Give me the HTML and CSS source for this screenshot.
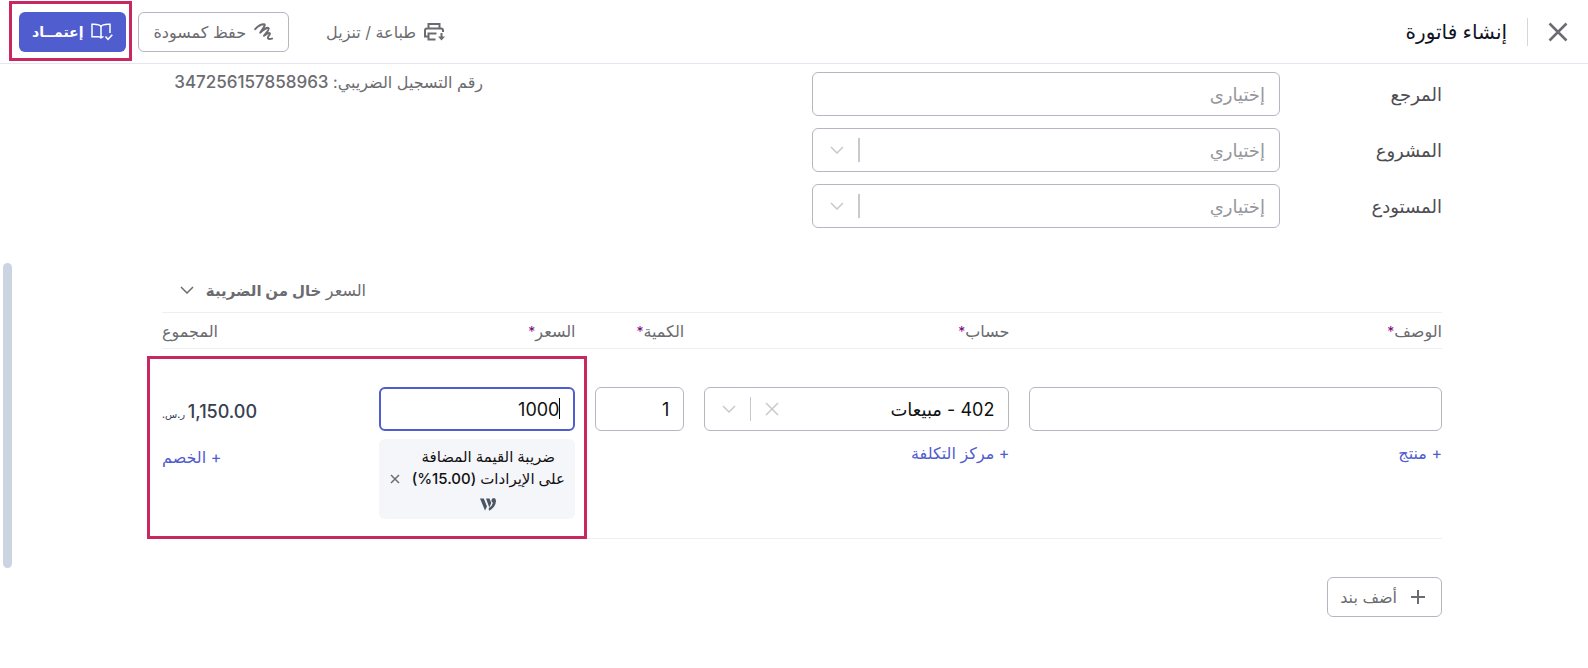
FILE: index.html
```html
<!DOCTYPE html>
<html lang="ar" dir="rtl">
<head>
  <meta charset="UTF-8">
  <meta name="viewport" content="width=device-width, initial-scale=1">
  <title>إنشاء فاتورة</title>
  <link rel="stylesheet" href="styles.css">
</head>
<body>
  <!-- Top bar -->
  <header class="topbar">
    <button type="button" class="icon-btn close-page" aria-label="إغلاق">
      <svg width="20" height="20" viewBox="0 0 20 20"><path d="M1.5 1.5l17 17M18.5 1.5l-17 17"/></svg>
    </button>
    <h1 class="page-title">إنشاء فاتورة</h1>
    <div class="actions">
      <button type="button" class="btn btn-plain">
        <svg class="icon" width="21" height="18" viewBox="0 0 21 18"><path d="M4.500 5.500V1h11v4.500M3.500 13.500H1V7.500q0-2 2-2h14q2 0 2 2V9M11.500 16.500h-7V10.500h8M17.500 10v6"/><path class="solid" d="M14 13.500h7L17.500 17.500z"/></svg>
        <span>طباعة / تنزيل</span>
      </button>
      <button type="button" class="btn btn-outline">
        <svg class="icon" width="20" height="18" viewBox="0 0 20 18"><path stroke-linecap="round" stroke-linejoin="round" d="M1.200 6.200C4 3 8 1.200 10.200 1.300 11.800 1.500 10 4 6.300 9.600 9.500 6.500 13.500 4.200 14.600 5.200c1.200 1-2 4-4.600 7.600 2.500-2 5-3.300 5.800-2.500.9 1-2.600 3.500-1.800 4.900.6 1 2.400.9 4 .4"/></svg>
        <span>حفظ كمسودة</span>
      </button>
      <div class="highlight">
        <button type="button" class="btn btn-primary">
          <svg class="icon" width="22" height="18" viewBox="0 0 22 18"><path d="M10 3.500C8.800 1.500 5.500 1 1 1.300v12.500h6.500q2 0 2.500 1.500V3.500C11.200 1.500 14.500 1 19 1.300V10M10 15.300q.3-1.500 2.500-1.500M14.500 13.500l2.500 2.800L21.300 11.800"/></svg>
          <span>إعتمــاد</span>
        </button>
      </div>
    </div>
  </header>

  <div class="scroll-thumb"></div>

  <main class="content">
    <section class="details">
      <div class="fields">
        <label for="reference">المرجع</label>
        <input type="text" id="reference" class="control" placeholder="إختيارى">

        <label for="project">المشروع</label>
        <div class="select-box">
          <select id="project" class="control empty"><option>إختياري</option></select>
          <span class="select-end">
            <span class="bar thick"></span>
            <svg class="chevron" width="14" height="8" viewBox="0 0 14 8"><path d="M1 1l6 6 6-6"/></svg>
          </span>
        </div>

        <label for="warehouse">المستودع</label>
        <div class="select-box">
          <select id="warehouse" class="control empty"><option>إختياري</option></select>
          <span class="select-end">
            <span class="bar thick"></span>
            <svg class="chevron" width="14" height="8" viewBox="0 0 14 8"><path d="M1 1l6 6 6-6"/></svg>
          </span>
        </div>
      </div>
      <p class="tax-number">رقم التسجيل الضريبي: <span class="digits">347256157858963</span></p>
    </section>

    <!-- Line items -->
    <section class="items">
      <button type="button" class="price-mode">
        <span>السعر <b>خال من الضريبة</b></span>
        <svg class="chevron" width="14" height="8" viewBox="0 0 14 8"><path d="M1 1l6 6 6-6"/></svg>
      </button>

      <table class="lines">
        <colgroup>
          <col class="col-desc">
          <col class="col-account">
          <col class="col-qty">
          <col class="col-price">
          <col class="col-total">
        </colgroup>
        <thead>
          <tr>
            <th scope="col">الوصف<span class="req">*</span></th>
            <th scope="col">حساب<span class="req">*</span></th>
            <th scope="col">الكمية<span class="req">*</span></th>
            <th scope="col">السعر<span class="req">*</span></th>
            <th scope="col" class="total">المجموع</th>
          </tr>
        </thead>
        <tbody>
          <tr>
            <td>
              <input type="text" class="control" aria-label="الوصف">
              <a href="#" class="add-link">+ منتج</a>
            </td>
            <td>
              <div class="select-box">
                <select class="control" aria-label="حساب"><option>402 - مبيعات</option></select>
                <span class="select-end">
                  <button type="button" class="icon-btn clear" aria-label="مسح">
                    <svg width="14" height="14" viewBox="0 0 14 14"><path d="M1 1l12 12M13 1L1 13"/></svg>
                  </button>
                  <span class="bar"></span>
                  <svg class="chevron" width="14" height="8" viewBox="0 0 14 8"><path d="M1 1l6 6 6-6"/></svg>
                </span>
              </div>
              <a href="#" class="add-link">+ مركز التكلفة</a>
            </td>
            <td>
              <input type="text" class="control" value="1" aria-label="الكمية">
            </td>
            <td>
              <div class="price-box">
                <input type="text" class="control active" value="1000" aria-label="السعر">
                <span class="caret"></span>
              </div>
              <div class="tax-chip">
                <div class="tax-name">
                  ضريبة القيمة المضافة<br>على الإيرادات (15.00%)
                  <svg class="logo" width="16" height="13" viewBox="0 0 16 13"><path d="M0 .5h3.800l3.200 8-2 4zM6 .5h3.500l1.800 4.500-2 4.500zM13.800 0q2.200.2 2.200 3Q15.500 9.500 9 12.800l-.3-2.600q3.600-2 4.300-5.400-1.600-.3-1.600-2.200Q11.500.2 13.800 0z"/></svg>
                </div>
                <button type="button" class="icon-btn remove-tax" aria-label="إزالة">
                  <svg width="10" height="10" viewBox="0 0 10 10"><path d="M1 1l8 8M9 1L1 9"/></svg>
                </button>
              </div>
            </td>
            <td class="total">
              <div class="amount">1,150.00<small> ر.س.</small></div>
              <a href="#" class="add-link">+ الخصم</a>
            </td>
          </tr>
        </tbody>
      </table>
      <div class="row-highlight"></div>
    </section>

    <button type="button" class="btn btn-outline add-line">
      <svg class="icon" width="14" height="14" viewBox="0 0 14 14"><path d="M7 0v14M0 7h14"/></svg>
      <span>أضف بند</span>
    </button>
  </main>
</body>
</html>
```
FILE: styles.css
```css
* {
  box-sizing: border-box;
}

body {
  margin: 0;
  background-color: #fff;
  color: #6b6c70;
  font-family: Inter, "DejaVu Sans", sans-serif;
  font-size: 16px;
}

button,
input,
select {
  font-family: inherit;
  font-size: 16px;
  color: inherit;
}

svg {
  display: block;
  flex: none;
  fill: none;
  stroke: currentColor;
  stroke-width: 2;
}

/* Top bar */
.topbar {
  display: flex;
  align-items: center;
  height: 64px;
  padding: 0 20px 0 19px;
  border-bottom: 1px solid #e5e6ef;
}

.icon-btn {
  padding: 0;
  border: none;
  background: none;
  cursor: pointer;
}

.page-title {
  margin: 0 20px 0 0;
  padding-right: 20px;
  border-right: 1px solid #d5d6da;
  color: #111322;
  font-size: 20px;
  font-weight: 500;
  line-height: 28px;
}

.actions {
  display: flex;
  gap: 12px;
  margin-right: auto;
}

.btn {
  display: flex;
  align-items: center;
  justify-content: center;
  gap: 8px;
  height: 40px;
  padding: 0 12px;
  border: 1px solid transparent;
  border-radius: 6px;
  background-color: transparent;
  white-space: nowrap;
  cursor: pointer;
}

.btn-plain {
  margin-left: 12px;
}

.btn-outline {
  padding: 0 14px;
  border-color: #b5b6c0;
}

.btn-primary {
  background-color: #505dcf;
  color: #fff;
  font-size: 14px;
  font-weight: 600;
}

.icon .solid {
  fill: currentColor;
  stroke: none;
}

.btn-primary .icon {
  stroke-width: 1.5px;
}

.highlight {
  position: relative;
}

.highlight::after {
  content: "";
  position: absolute;
  inset: -11px -6px -9px -10px;
  border: 3px solid #c8285f;
  pointer-events: none;
}

.scroll-thumb {
  position: fixed;
  top: 263px;
  left: 3px;
  width: 9px;
  height: 305px;
  border-radius: 5px;
  background-color: #cbd5e1;
}

/* Page content */
.content {
  max-width: 1280px;
  margin: 0 146px 0 162px;
  padding-top: 8px;
}

.details {
  display: flex;
  justify-content: space-between;
  align-items: flex-start;
}

.fields {
  display: grid;
  grid-template-columns: 162px 1fr;
  row-gap: 12px;
  align-items: center;
  width: 630px;
  color: #4c4d52;
  font-size: 18px;
}

.tax-number {
  width: 321px;
  margin: 0;
  line-height: 20px;
}

.digits {
  font-size: 17px;
  font-weight: 500;
}

.control {
  display: block;
  width: 100%;
  height: 44px;
  padding: 0 14px;
  border: 1px solid #b5b6c0;
  border-radius: 6px;
  background-color: #fff;
  color: #111;
  font-size: 18px;
  appearance: none;
  outline: none;
}

.control.empty,
.control::placeholder {
  color: #96979c;
  opacity: 1;
}

.control.active {
  border: 2px solid #505dcf;
}

.select-box,
.price-box {
  position: relative;
}

.select-end {
  position: absolute;
  top: 0;
  left: 18px;
  display: flex;
  align-items: center;
  gap: 14px;
  height: 44px;
  color: #c9c9cb;
  pointer-events: none;
}

.bar {
  width: 1px;
  height: 24px;
  background-color: #c9c9cb;
}

.bar.thick {
  width: 2px;
}

.caret {
  position: absolute;
  top: 11px;
  right: 15px;
  width: 1px;
  height: 21px;
  background-color: #000;
}

/* Line items */
.items {
  position: relative;
  margin-top: 47px;
}

.price-mode {
  display: flex;
  align-items: center;
  justify-content: space-between;
  width: 186px;
  height: 29px;
  margin: 0 auto 8px 18px;
  padding: 0;
  border: none;
  background: none;
  white-space: nowrap;
}

.price-mode b {
  font-size: 15px;
  font-weight: 600;
}

.lines {
  width: 100%;
  table-layout: fixed;
  border-collapse: collapse;
}

.col-desc {
  width: 33.8%;
}

.col-account {
  width: 25.4%;
}

.col-qty {
  width: 8.5%;
}

.col-price {
  width: 16.9%;
}

.lines th {
  height: 36px;
  padding: 0 0 0 20px;
  border-top: 1px solid #efeff2;
  border-bottom: 1px solid #efeff2;
  font-weight: 400;
  text-align: right;
}

.lines td {
  height: 190px;
  padding: 38px 0 0 20px;
  border-bottom: 1px solid #efeff2;
  vertical-align: top;
}

.lines .total {
  padding-left: 0;
  text-align: left;
}

.req {
  color: #800080;
  font-size: 14px;
}

.add-link {
  display: inline-block;
  margin-top: 10px;
  color: #505dcf;
  line-height: 24px;
  text-decoration: none;
}

.tax-chip {
  display: flex;
  align-items: center;
  justify-content: center;
  gap: 12px;
  height: 80px;
  margin-top: 8px;
  border-radius: 6px;
  background-color: #f5f6fa;
}

.tax-name {
  padding-bottom: 2px;
  color: #111;
  font-size: 15px;
  font-weight: 500;
  line-height: 22px;
  text-align: center;
  white-space: nowrap;
}

.logo {
  margin: 8px auto 0;
  color: #4b5563;
  fill: currentColor;
  stroke: none;
}

.icon-btn svg,
.chevron {
  stroke-width: 1.5px;
}

.close-page {
  color: #6b6c70;
}

.close-page svg {
  stroke-width: 2.5px;
}

.clear {
  color: #c9c9cb;
}

.amount {
  height: 44px;
  padding-top: 3px;
  color: #374151;
  font-size: 18px;
  font-weight: 500;
  line-height: 44px;
  white-space: nowrap;
}

.amount small {
  font-size: 10px;
}

.total .add-link {
  margin-top: 14px;
}

.row-highlight {
  position: absolute;
  bottom: 0;
  left: -15px;
  width: 34.4%;
  height: 183px;
  border: 3px solid #c8285f;
  pointer-events: none;
}

.add-line {
  gap: 14px;
  margin-top: 38px;
  padding: 0 16px 0 12px;
}
```
